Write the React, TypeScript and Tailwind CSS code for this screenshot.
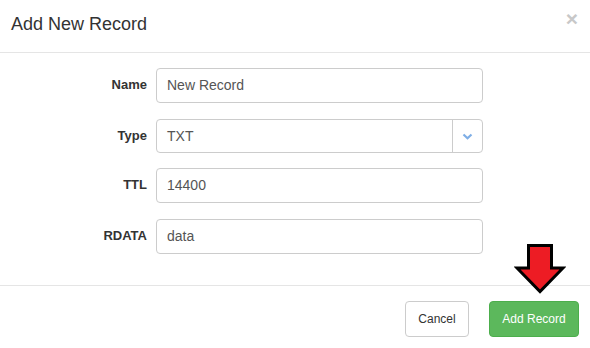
import React from "react";

const font = { fontFamily: '"Liberation Sans", Arial, Helvetica, sans-serif' };

function Row({ label, children, mt }: { label: string; children: React.ReactNode; mt: string }) {
  return (
    <div className={`flex ${mt}`}>
      <div className="w-[147px] text-right text-[13px] font-bold leading-[18px] pt-[8px] text-[#333]">{label}</div>
      <div className="ml-[9px] w-[327px]">{children}</div>
    </div>
  );
}

function TextInput({ value, h }: { value: string; h: string }) {
  return (
    <div className={`${h} w-full border border-[#ccc] rounded-[4px] flex items-center pl-[10px] text-[14px] text-[#555] bg-white`}>
      {value}
    </div>
  );
}

export default function App() {
  return (
    <div style={font} className="relative w-[590px] h-[348px] bg-white overflow-hidden">
      {/* Header */}
      <div className="h-[53px] border-b border-[#e5e5e5] flex items-start justify-between pl-[11px] pr-[12px]">
        <div className="pt-[11px] text-[18px] leading-[26px] text-[#333]">Add New Record</div>
        <div className="pt-[6px] text-[21px] font-bold leading-[26px] text-[#c8c8c8]">×</div>
      </div>

      {/* Body */}
      <div className="h-[233px] border-b border-[#e5e5e5] pt-[15px]">
        <Row label="Name" mt="mt-0">
          <TextInput value="New Record" h="h-[35px]" />
        </Row>
        <Row label="Type" mt="mt-[16px]">
          <div className="h-[34px] w-full border border-[#ccc] rounded-[4px] flex items-stretch text-[14px] text-[#555] bg-white">
            <div className="flex-1 flex items-center pl-[10px]">TXT</div>
            <div className="w-[30px] border-l border-[#ccc] flex items-center justify-center">
              <svg width="11" height="7" viewBox="0 0 11 7">
                <polyline points="1.5,1.5 5.5,5.2 9.5,1.5" fill="none" stroke="#7eaee6" strokeWidth="2.2" />
              </svg>
            </div>
          </div>
        </Row>
        <Row label="TTL" mt="mt-[15px]">
          <TextInput value="14400" h="h-[35px]" />
        </Row>
        <Row label="RDATA" mt="mt-[16px]">
          <TextInput value="data" h="h-[35px]" />
        </Row>
      </div>

      {/* Footer */}
      <div className="flex justify-end gap-[20px] pt-[15px] pr-[11px]">
        <div className="h-[36px] w-[64px] border border-[#ccc] rounded-[4px] flex items-center justify-center text-[12px] text-[#333] bg-white">
          Cancel
        </div>
        <div className="h-[36px] w-[90px] border border-[#4cae4c] rounded-[4px] flex items-center justify-center text-[12px] text-white bg-[#5cb85c]">
          Add Record
        </div>
      </div>

      {/* Red arrow annotation */}
      <svg className="absolute left-[514px] top-[242px]" width="52" height="54" viewBox="0 0 52 54">
        <polygon
          points="14.5,3.5 37.5,3.5 37.5,26 49,26 26,49.5 3,26 14.5,26"
          fill="#ed1c24"
          stroke="#000"
          strokeWidth="3"
          strokeLinejoin="miter"
        />
      </svg>
    </div>
  );
}
